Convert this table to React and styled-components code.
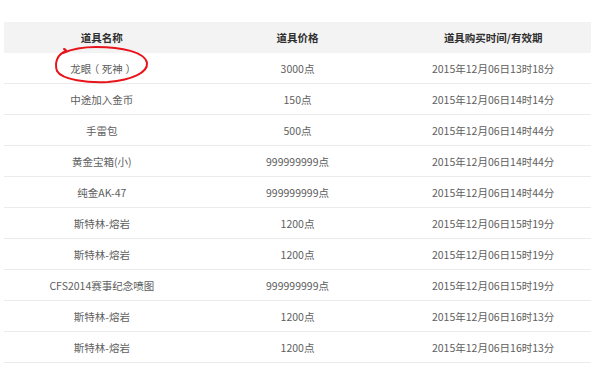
import React from "react";
import styled, { createGlobalStyle } from "styled-components";

const Global = createGlobalStyle`
  html, body { margin: 0; padding: 0; background: #fff; }
  body { font-family: "Noto Sans CJK SC", "Noto Sans", sans-serif; }
`;

const Page = styled.div`
  padding: 22px 9px 0 4px;
  width: 600px;
  box-sizing: border-box;
  position: relative;
`;

const Table = styled.div`
  display: flex;
  flex-direction: column;
  width: 587px;
`;

const Row = styled.div`
  display: grid;
  grid-template-columns: repeat(3, 1fr);
  height: 31px;
  box-sizing: border-box;
  align-items: center;
  background: ${(p) => (p.$head ? "#f3f3f3" : "transparent")};
  border-bottom: ${(p) => (p.$head ? "none" : "1px solid #ebebeb")};
`;

const Cell = styled.div`
  text-align: center;
  font-size: 10.5px;
  line-height: 14px;
  color: ${(p) => (p.$head ? "#2f2f2f" : "#5e5e5e")};
  font-weight: ${(p) => (p.$head ? 700 : 400)};
  padding-top: ${(p) => (p.$head ? "0" : "1px")};
`;

const Paren = styled.span`
  font-feature-settings: "halt" 1;
  padding: 0 0.25em;
`;

const Circle = styled.svg`
  position: absolute;
  left: 0;
  top: 0;
  width: 600px;
  height: 366px;
  pointer-events: none;
`;

const renderText = (t) => {
  if (!/[（）]/.test(t)) return t;
  return t
    .split(/([（）])/)
    .map((part, k) =>
      part === "（" || part === "）" ? <Paren key={k}>{part}</Paren> : part
    );
};

const rows = [
  ["龙眼（死神）", "3000点", "2015年12月06日13时18分"],
  ["中途加入金币", "150点", "2015年12月06日14时14分"],
  ["手雷包", "500点", "2015年12月06日14时44分"],
  ["黄金宝箱(小)", "999999999点", "2015年12月06日14时44分"],
  ["纯金AK-47", "999999999点", "2015年12月06日14时44分"],
  ["斯特林-熔岩", "1200点", "2015年12月06日15时19分"],
  ["斯特林-熔岩", "1200点", "2015年12月06日15时19分"],
  ["CFS2014赛事纪念喷图", "999999999点", "2015年12月06日15时19分"],
  ["斯特林-熔岩", "1200点", "2015年12月06日16时13分"],
  ["斯特林-熔岩", "1200点", "2015年12月06日16时13分"],
];

export default function App() {
  return (
    <>
      <Global />
      <Page>
        <Table>
          <Row $head>
            <Cell $head>道具名称</Cell>
            <Cell $head>道具价格</Cell>
            <Cell $head>道具购买时间/有效期</Cell>
          </Row>
          {rows.map((r, i) => (
            <Row key={i}>
              {r.map((c, j) => (
                <Cell key={j}>{renderText(c)}</Cell>
              ))}
            </Row>
          ))}
        </Table>
        <Circle viewBox="0 0 600 366">
          <path
            d="M64 49 C66 50 67 51 66 51 C58 54 54 62 57 71 C62 80 88 83 108 82 C133 80 148 72 147 63 C145 52 122 47 96 47 C82 47 72 49 63 53"
            fill="none"
            stroke="#e8141c"
            strokeWidth="2"
            strokeLinecap="round"
          />
        </Circle>
      </Page>
    </>
  );
}
